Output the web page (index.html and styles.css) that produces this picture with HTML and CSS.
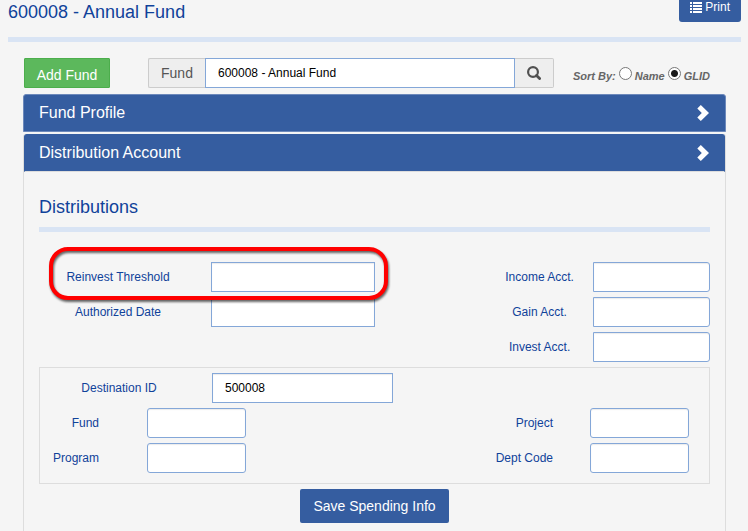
FILE: index.html
```
<!DOCTYPE html>
<html lang="en">
<head>
  <meta charset="UTF-8" />
  <meta name="viewport" content="width=device-width, initial-scale=1.0"/>
  <title>600008 - Annual Fund</title>
  <link rel="stylesheet" href="styles.css">
</head>
<body>

  <header class="page-header">
    <h1>600008 - Annual Fund</h1>
    <button class="btn print-btn" type="button">
      <svg width="12" height="11" viewBox="0 0 12 11" fill="#fff" shape-rendering="crispEdges">
        <path d="M0 0h2v2H0zM3 0h9v2H3zM0 3h2v2H0zM3 3h9v2H3zM0 6h2v2H0zM3 6h9v2H3zM0 9h2v2H0zM3 9h9v2H3z"/>
      </svg>
      <span>Print</span>
    </button>
  </header>

  <main class="content">
    <div class="toolbar">
      <button class="add-btn" type="button">Add Fund</button>
      <div class="search-group">
        <label class="addon" for="fundSearch">Fund</label>
        <input class="search-input" id="fundSearch" type="text" value="600008 - Annual Fund">
        <button class="search-btn" type="button" aria-label="Search">
          <svg width="14" height="14" viewBox="0 0 14 14" fill="none" stroke="#505050">
            <circle cx="6" cy="6" r="4.9" stroke-width="2.2"/>
            <path d="M9.5 9.5L12.6 12.6" stroke-width="2.8" stroke-linecap="round"/>
          </svg>
        </button>
      </div>
      <div class="sort" role="radiogroup" aria-labelledby="sortLabel">
        <span id="sortLabel">Sort By:</span>
        <input type="radio" name="sort" id="sortName">
        <label for="sortName">Name</label>
        <input type="radio" name="sort" id="sortGlid" checked>
        <label for="sortGlid">GLID</label>
      </div>
    </div>

    <section class="panel">
      <button class="panel-heading" type="button">
        <span>Fund Profile</span>
        <svg width="12" height="16" viewBox="0 0 12 16" fill="#fff">
          <path d="M3.8 0L12 8L3.8 16L0.3 12.5L4.8 8L0.3 3.5z"/>
        </svg>
      </button>
    </section>

    <section class="panel panel-open">
      <button class="panel-heading" type="button">
        <span>Distribution Account</span>
        <svg width="12" height="16" viewBox="0 0 12 16" fill="#fff">
          <path d="M3.8 0L12 8L3.8 16L0.3 12.5L4.8 8L0.3 3.5z"/>
        </svg>
      </button>

      <form class="panel-body">
        <h2>Distributions</h2>

        <div class="columns">
          <div class="col">
            <div class="field highlighted">
              <label for="threshold">Reinvest Threshold</label>
              <input id="threshold" type="text">
            </div>
            <div class="field">
              <label for="authDate">Authorized Date</label>
              <input id="authDate" type="text">
            </div>
          </div>
          <div class="col col-acct">
            <div class="field">
              <label for="incomeAcct">Income Acct.</label>
              <input id="incomeAcct" type="text">
            </div>
            <div class="field">
              <label for="gainAcct">Gain Acct.</label>
              <input id="gainAcct" type="text">
            </div>
            <div class="field">
              <label for="investAcct">Invest Acct.</label>
              <input id="investAcct" type="text">
            </div>
          </div>
        </div>

        <div class="destination">
          <div class="field field-dest">
            <label for="destId">Destination ID</label>
            <input id="destId" type="text" value="500008">
          </div>
          <div class="field-row">
            <div class="field field-code">
              <label for="fund">Fund</label>
              <input id="fund" type="text">
            </div>
            <div class="field field-code">
              <label for="project">Project</label>
              <input id="project" type="text">
            </div>
          </div>
          <div class="field-row">
            <div class="field field-code">
              <label for="program">Program</label>
              <input id="program" type="text">
            </div>
            <div class="field field-code">
              <label for="deptCode">Dept Code</label>
              <input id="deptCode" type="text">
            </div>
          </div>
        </div>

        <button class="btn save-btn" type="button">Save Spending Info</button>
      </form>
    </section>
  </main>

</body>
</html>
```
FILE: styles.css
```
* {
  box-sizing: border-box;
}

body {
  margin: 0;
  min-height: 100vh;
  display: flex;
  flex-direction: column;
  font-family: "Liberation Sans", Arial, sans-serif;
  font-size: 12px;
  background-color: #f5f5f5;
  color: #10429a;
}

button,
input {
  font-family: inherit;
  margin: 0;
}

button {
  cursor: pointer;
}

h1,
h2 {
  margin: 0;
  font-size: 18px;
  font-weight: normal;
  line-height: 20px;
}

.page-header {
  display: flex;
  justify-content: space-between;
  align-items: flex-start;
  height: 42px;
  margin: 0 7px 0 8px;
  border-bottom: 5px solid #d9e4f4;
}

.page-header h1 {
  padding-top: 2px;
}

.btn {
  background-color: #355da0;
  color: white;
  border: none;
  border-radius: 2px;
}

.print-btn {
  display: flex;
  align-items: center;
  gap: 3px;
  height: 22px;
  padding: 0 11px 8px;
  font-size: 12px;
  border-radius: 0 0 3px 3px;
}

.content {
  flex: 1;
  display: flex;
  flex-direction: column;
  margin: 0 22px 0 23px;
}

.toolbar {
  display: flex;
  height: 30px;
  margin: 16px 0 6px 1px;
}

.add-btn {
  width: 86px;
  padding: 3px 0 0;
  font-size: 14px;
  color: white;
  background-color: #5cb85c;
  border: 1px solid #4cae4c;
  border-radius: 1px;
}

.search-group {
  flex: 1;
  display: flex;
  margin-left: 38px;
}

.addon,
.search-btn {
  display: flex;
  align-items: center;
  justify-content: center;
  font-size: 14px;
  color: #555;
  background-color: #eee;
  border: 1px solid #ccc;
}

.addon {
  width: 57px;
  border-right: none;
  border-radius: 2px 0 0 2px;
}

.search-input {
  flex: 1;
  min-width: 0;
  padding: 0 12px;
  font-size: 12px;
  color: #000;
  background-color: white;
  border: 1px solid #84a7d8;
}

.search-btn {
  width: 39px;
  padding: 0;
  border-left: none;
  border-radius: 0 2px 2px 0;
}

.sort {
  display: flex;
  align-items: center;
  margin: 0 16px 0 19px;
  padding-top: 5px;
  font-size: 11px;
  font-style: italic;
  font-weight: bold;
  color: #666;
}

.sort input {
  appearance: none;
  width: 13px;
  height: 13px;
  margin: 0 3px 5px;
  background-color: white;
  border: 1px solid #777;
  border-radius: 50%;
}

.sort input:checked {
  background-image: radial-gradient(circle, #1a1a1a 3px, transparent 4px);
}

.panel {
  margin-bottom: 2px;
}

.panel-heading {
  width: 100%;
  height: 38px;
  display: flex;
  justify-content: space-between;
  align-items: center;
  padding: 0 16px 0 15px;
  font-size: 16px;
  color: white;
  background-color: #355da0;
  border: 1px solid #6d89bb;
  border-radius: 3px 3px 0 0;
}

.panel-open {
  flex: 1;
  margin: 0;
  border: 1px solid #ddd;
  border-width: 0 1px;
  border-radius: 3px 3px 0 0;
}

.panel-open .panel-heading {
  padding: 0 15px 0 14px;
  border-color: #355da0;
  border-bottom-color: #ddd;
}

.panel-body {
  padding: 25px 15px 8px;
}

h2 {
  height: 35px;
  border-bottom: 5px solid #d9e4f4;
}

.columns {
  display: flex;
  margin-top: 30px;
}

.col {
  flex: 1;
  min-width: 0;
  display: flex;
  flex-direction: column;
  gap: 5px;
}

.field {
  display: flex;
  align-items: center;
}

.field label {
  width: 172px;
  padding-right: 14px;
  text-align: center;
}

.field input {
  flex: 1;
  min-width: 0;
  height: 30px;
  padding: 0 12px;
  font-size: 12px;
  color: #000;
  background-color: white;
  border: 1px solid #84a7d8;
  box-shadow: inset 0 1px 1px rgba(0, 0, 0, 0.08);
}

/* red callout drawn over the threshold row */
.highlighted {
  position: relative;
}

.highlighted::after {
  content: "";
  position: absolute;
  top: -15px;
  right: -13px;
  bottom: -8px;
  left: 10px;
  border: 4px solid #f00;
  border-radius: 19px;
  filter: drop-shadow(1px 2px 1px rgba(0, 0, 0, 0.6));
  pointer-events: none;
}

.col-acct .field {
  justify-content: flex-end;
}

.col-acct .field label {
  width: 106px;
  padding-right: 0;
}

.col-acct .field input {
  flex: 0 0 35%;
  border-radius: 0 3px 3px 0;
}

.destination {
  display: flex;
  flex-direction: column;
  gap: 5px;
  margin-top: 5px;
  padding: 5px 0 10px;
  border: 1px solid #ddd;
}

.field-dest input {
  flex: 0 0 27%;
}

.field-row {
  display: flex;
  justify-content: space-between;
  padding-right: 20px;
}

.field-code label {
  width: 107px;
  padding-right: 48px;
  text-align: right;
}

.field-code:last-child label {
  padding-right: 37px;
}

.field-code input {
  flex: 0 0 99px;
  border-radius: 3px;
}

.save-btn {
  display: block;
  height: 34px;
  margin: 5px auto 0;
  padding: 0 13px;
  font-size: 14px;
}
```
